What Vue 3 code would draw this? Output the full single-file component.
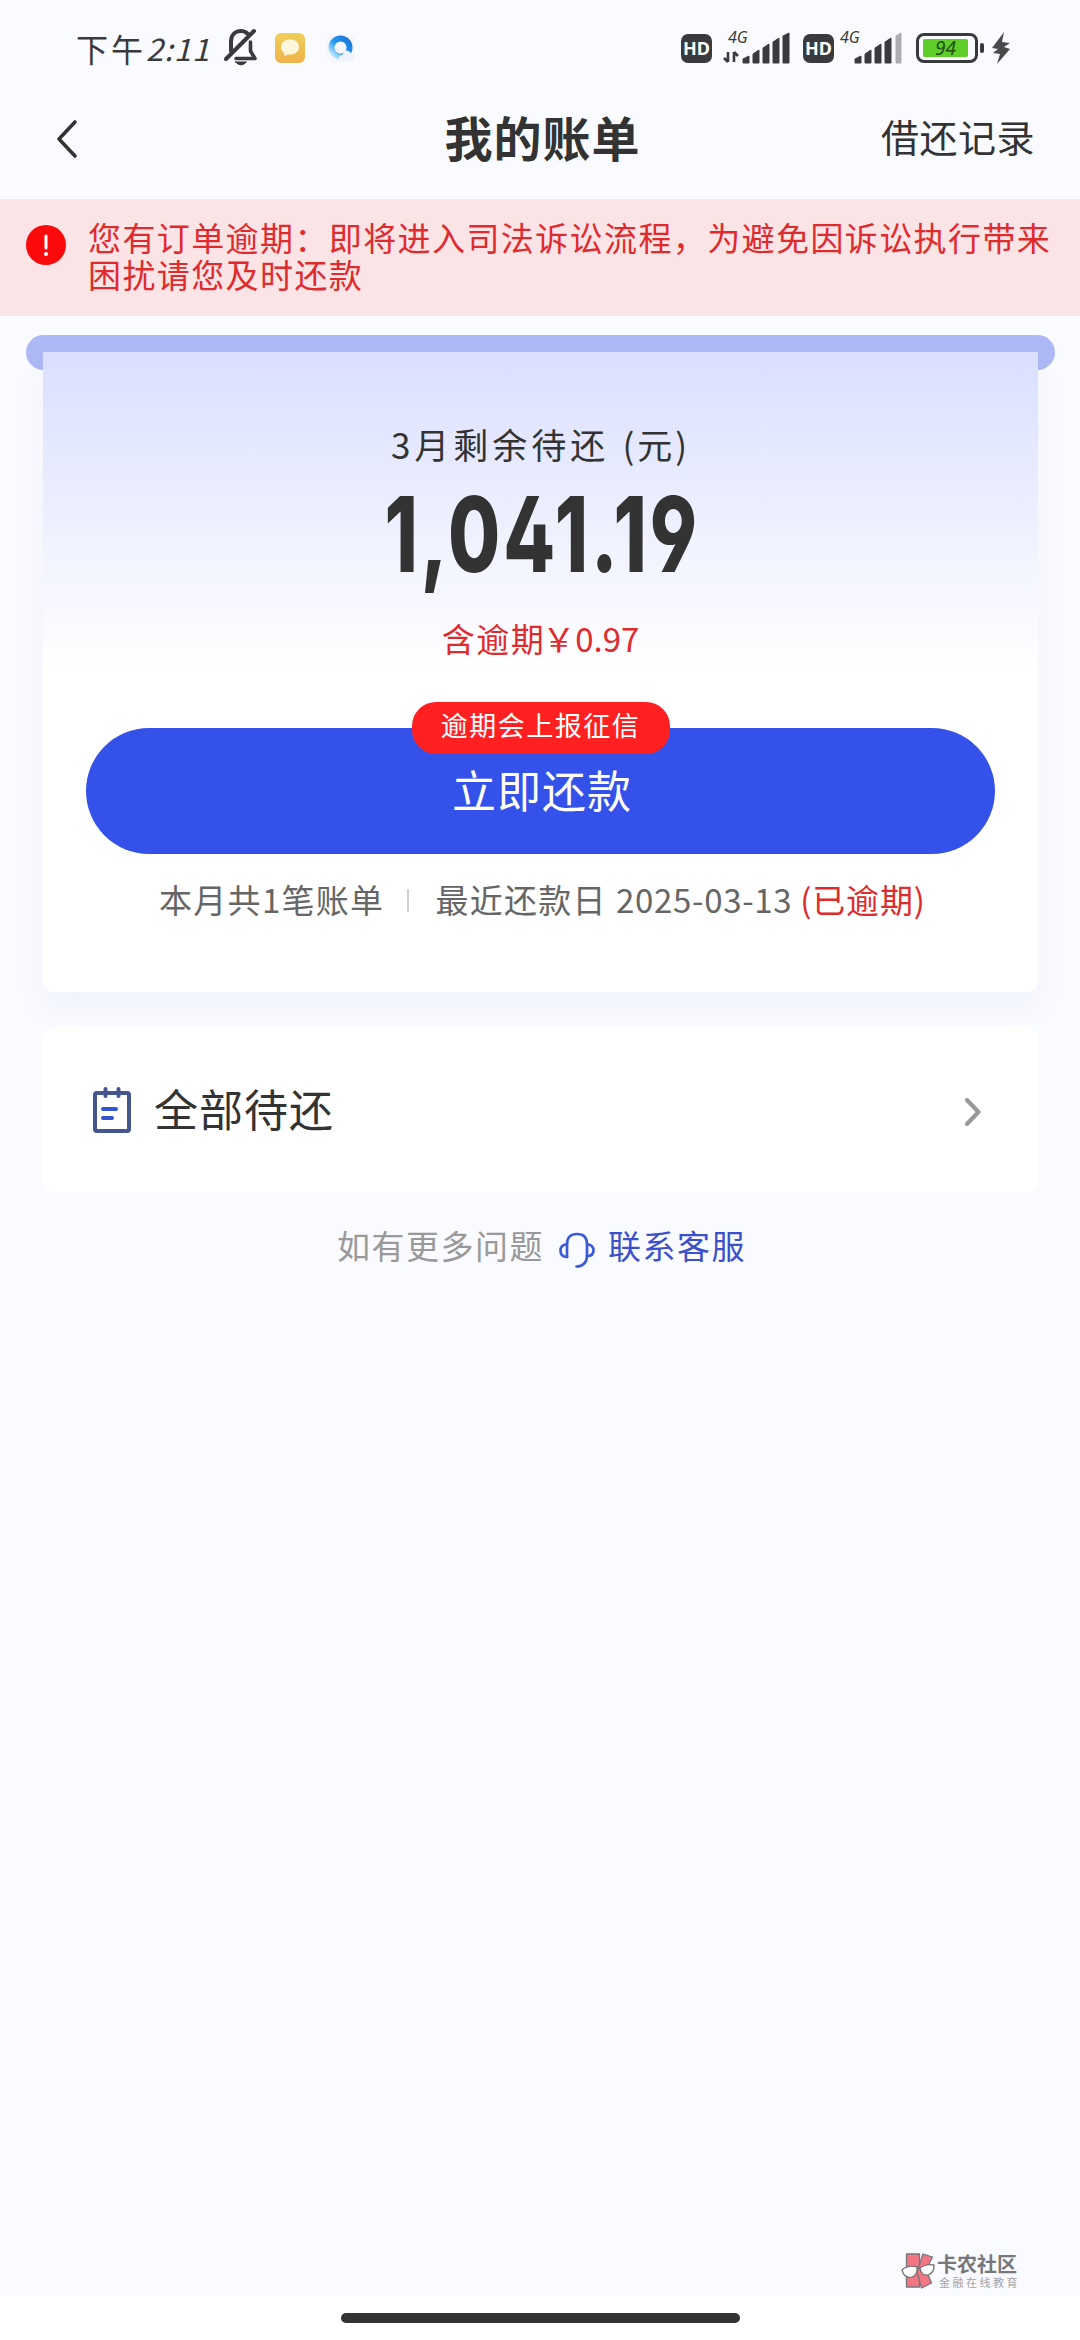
<script setup>
const notice = '您有订单逾期：即将进入司法诉讼流程，为避免因诉讼执行带来困扰请您及时还款'
</script>

<template>
  <div class="screen">
    <header class="status">
      <div class="clock"><span class="ampm">下午</span><span class="time">2:11</span></div>
      <svg class="mute" width="36" height="40" viewBox="0 0 36 40" fill="none" stroke="#3a3a3c" stroke-width="4" stroke-linecap="round" stroke-linejoin="round">
        <path d="M8 23V14C8 7 12 3 18 3C21 3 23 4 25 6" /><path d="M27.500 14V23L32 30.500H13" stroke-width="3.600" /><path d="M3 31L31 3" />
        <path d="M12.500 34H23.500Q18 40 12.500 34Z" fill="#3a3a3c" stroke-width="1" />
      </svg>
      <svg class="msg" width="30" height="30" viewBox="0 0 30 30">
        <defs><linearGradient id="gold" x1="0" y1="0" x2="0" y2="1"><stop offset="0" stop-color="#efcf58" /><stop offset="1" stop-color="#eeb24a" /></linearGradient></defs>
        <rect width="30" height="30" rx="6" fill="url(#gold)" />
        <path d="M15 6.500C9 6.500 6 10 6 14C6 17 7.500 19 9.500 20.500L9 23L13 21.500C20 22 24 18.500 24 14C24 10 21 6.500 15 6.500Z" fill="#fff7dc" />
      </svg>
      <svg class="browser" width="30" height="30" viewBox="0 0 30 30">
        <defs><linearGradient id="sky" x1="1" y1="0" x2="0" y2="1"><stop offset="0" stop-color="#1673d8" /><stop offset=".55" stop-color="#2a9df0" /><stop offset="1" stop-color="#d5f2ff" /></linearGradient></defs>
        <rect x="1" y="1" width="28" height="28" rx="6" fill="#f5f7fb" />
        <circle cx="14.500" cy="14.500" r="9" fill="none" stroke="url(#sky)" stroke-width="6" />
        <path d="M12 28Q12 22.500 16.500 22Q18 16 22.500 18Q25 19 25 21Q29 22 28 25Q27 28 24 28Z" fill="#eef3fb" />
      </svg>
      <div class="signals">
        <span class="hd">HD</span>
        <div class="net">
          <span class="gen">4G</span>
          <svg width="68" height="36" viewBox="0 0 68 36" fill="#3a3a3c">
            <path d="M5 22V32M1 28L5 32M11 32V22M11 22L15 26" stroke="#3a3a3c" stroke-width="2.600" fill="none" />
            <path d="M20 29L26 26V33H20ZM30 24L36 20V33H30ZM40 18L46 14V33H40ZM50 12L56 8V33H50ZM60 6L66 3V33H60Z" stroke="#3a3a3c" stroke-width="1" stroke-linejoin="round" />
          </svg>
        </div>
        <span class="hd second">HD</span>
        <div class="net two">
          <span class="gen">4G</span>
          <svg width="64" height="36" viewBox="0 0 64 36" fill="#3a3a3c">
            <path d="M16 29L22 26V33H16ZM26 24L32 20V33H26ZM36 18L42 14V33H36ZM46 12L52 8V33H46Z" stroke="#3a3a3c" stroke-linejoin="round" />
            <path d="M57 6L62 3V33H57Z" fill="#aeaeb0" stroke="#aeaeb0" stroke-linejoin="round" />
          </svg>
        </div>
        <div class="battery"><span class="level">94</span></div><i class="cap"></i>
        <svg class="bolt" width="18" height="32" viewBox="0 0 18 32"><path d="M12 0L0 16L6 17L1 21L8 22L5 32L18 17L12 15L18 11L10 10Z" fill="#4a4a4c" /></svg>
      </div>
    </header>

    <nav class="title-bar">
      <svg class="back" width="24" height="40" viewBox="0 0 24 40"><path d="M20 3L4 20L20 37" fill="none" stroke="#333" stroke-width="3.600" stroke-linecap="round" stroke-linejoin="round" /></svg>
      <h1>我的账单</h1>
      <a class="history">借还记录</a>
    </nav>

    <section class="notice">
      <svg width="40" height="40" viewBox="0 0 40 40"><circle cx="20" cy="20" r="20" fill="#fb0a0c" /><path d="M20 11V23" stroke="#fff" stroke-width="3" stroke-linecap="round" /><circle cx="20" cy="29" r="2" fill="#fff" /></svg>
      <p>{{ notice }}</p>
    </section>

    <main>
      <div class="slot"></div>
      <section class="bill">
        <p class="label">3月剩余待还<span class="unit">(元)</span></p>
        <p class="amount">1,041.19</p>
        <p class="overdue">含逾期<span class="yen">￥</span><span class="fee">0.97</span></p>
        <div class="pay-wrap">
          <button class="pay">立即还款</button>
          <span class="badge">逾期会上报征信</span>
        </div>
        <p class="meta"><span class="count">本月共1笔账单</span><i class="rule"></i><span class="due">最近还款日</span><span class="date">2025-03-13</span><span class="late">(已逾期)</span></p>
      </section>

      <section class="all">
        <svg width="38" height="46" viewBox="0 0 38 46" fill="none" stroke="#45568f" stroke-width="4" stroke-linecap="round">
          <rect x="2" y="6" width="34" height="38" rx="2" /><path d="M12.500 2V9M25.500 2V9" /><path d="M10 22H23M10 31H19" stroke="#3454d1" />
        </svg>
        <span>全部待还</span>
        <svg class="go" width="18" height="30" viewBox="0 0 18 30"><path d="M3 3L14.500 15L3 27" fill="none" stroke="#999" stroke-width="4.200" stroke-linecap="round" stroke-linejoin="round" /></svg>
      </section>

      <p class="help">
        <span class="ask">如有更多问题</span>
        <svg width="36" height="36" viewBox="0 0 36 36" fill="none" stroke="#3b5bdb" stroke-width="2.700" stroke-linecap="round" stroke-linejoin="round">
          <path d="M8 25V12C8 5 12 2 18 2C24 2 28 5 28 12V24C28 30 24 34.500 17.500 34.500" /><path d="M8 12Q1.500 13 1.500 18.500Q1.500 25 8 25M28 12Q34.500 13 34.500 18.500Q34.500 24 28 24" />
        </svg>
        <a>联系客服</a>
      </p>
    </main>

    <footer class="brand">
      <svg width="34" height="36" viewBox="0 0 34 36" stroke="#77777b" stroke-width="1.300" stroke-linejoin="round">
        <path d="M5.500 1H18.500V34H5.500Z" fill="#f47683" />
        <path d="M22 1L31.500 4L25 17L30.500 30L20.500 35L16 19Z" fill="#f47683" />
        <path d="M1 17Q7 11.500 16 14Q17 22 10 24.500Q3 25 1 17ZM19 15Q25 10.500 33 12Q33.500 20 27 22Q20 23 19 15Z" fill="#fff" /><path d="M16 15.500L19.500 15" />
      </svg>
      <div><strong>卡农社区</strong><small>金融在线教育</small></div>
    </footer>
    <div class="gesture"><i></i></div>
  </div>
</template>

<style>
html, body { margin: 0; background: #fafbff; }
</style>

<style scoped>
.screen { width: 1080px; height: 2340px; display: flex; flex-direction: column; overflow: hidden; background: #fafbff; color: #333; font-family: "Noto Sans CJK SC", sans-serif; }
p, h1 { margin: 0; }
i { font-style: normal; }
svg { flex: none; display: block; }
.status { height: 98px; display: flex; align-items: center; padding: 0 0 2px 76px; box-sizing: border-box; color: #3a3a3c; }
.clock { width: 147px; display: flex; align-items: center; font-size: 32px; line-height: 40px; white-space: nowrap; }
.ampm { letter-spacing: 3px; }
.time { font-style: italic; font-size: 31px; letter-spacing: 1px; }
.msg { margin-left: 16px; }
.browser { margin-left: 21px; }
.signals { display: flex; align-items: center; margin-left: 325px; }
.hd { width: 31px; height: 29px; border-radius: 7px; background: #3a3a3c; color: #fff; font: bold 18px/29px "Noto Sans", sans-serif; text-align: center; }
.net { position: relative; margin-left: 11px; }
/* network generation label sits over the signal bars */
.gen { position: absolute; left: 5px; top: -4px; font: italic 16px/22px "Noto Sans", sans-serif; }
.second { margin-left: 12px; }
.two { margin-left: 5px; }
.two .gen { left: 1px; }
.battery { box-sizing: border-box; width: 62px; height: 30px; margin-left: 13px; border: 3px solid #3a3a3c; border-radius: 8px; padding: 3px 7px 3px 4px; }
.level { display: block; height: 18px; border-radius: 2px; background: #5fce29; color: #204d12; font: italic 19px/18px "Noto Sans", sans-serif; text-align: center; }
.cap { width: 4px; height: 10px; border-radius: 2px; margin-left: 2px; background: #3a3a3c; }
.bolt { margin-left: 8px; }

.title-bar { height: 101px; display: grid; grid-template-columns: 300px 1fr 300px; align-items: center; padding-bottom: 20px; box-sizing: border-box; }
.back { margin-left: 55px; }
h1 { font-size: 48px; line-height: 60px; font-weight: 700; text-align: center; letter-spacing: 1px; margin: -6px 0 0 5px; }
.history { justify-self: end; margin: -5px 45px 0 0; font-size: 38px; line-height: 60px; letter-spacing: .5px; }

.notice { height: 117px; box-sizing: border-box; display: flex; background: #fbe4e6; padding: 20px 0 0 26px; }
.notice svg { margin-top: 6px; }
.notice p { width: 972px; margin-left: 22px; font-size: 33px; line-height: 37px; letter-spacing: 1.400px; color: #e02b2e; }

main { flex: 1; padding: 19px 25px 0 26px; }
.slot { height: 35px; border-radius: 18px; background: #adb8f5; }
.bill { height: 640px; margin: -18px 17px 35px; box-sizing: border-box; padding-top: 69px; border-radius: 0 0 10px 10px; background: linear-gradient(#dadfff, #fff 315px); box-shadow: 0 16px 30px rgba(75, 95, 200, .05); text-align: center; }
.label { font-size: 35px; line-height: 46px; letter-spacing: 4px; }
.unit { margin-left: 13px; letter-spacing: 3px; }
.amount { height: 124px; padding: 5px 0 0 5px; font: 800 105px/124px Inter, sans-serif; font-feature-settings: "ss01" 1; letter-spacing: 4px; transform: scaleX(.72); }
.overdue { margin-top: 18px; font-size: 33px; line-height: 48px; color: #e02b2e; letter-spacing: 1.500px; }
.yen { margin-left: -3px; letter-spacing: 0; }
.fee { letter-spacing: 0; }
.pay-wrap { position: relative; margin: 66px 43px 0; height: 126px; }
.pay { width: 100%; height: 126px; border: 0; border-radius: 63px; background: #3452e9; color: #fff; font: 44px/122px "Noto Sans CJK SC", sans-serif; padding: 0 0 4px 3px; box-sizing: border-box; letter-spacing: 1px; display: block; }
.badge { position: absolute; left: 50%; top: -26px; width: 258px; height: 52px; transform: translateX(-50%); border-radius: 24px; background: #ff2122; color: #fff; font-size: 27px; line-height: 46px; letter-spacing: 1.500px; white-space: nowrap; }
.meta { display: flex; align-items: center; height: 48px; margin: 21px 0 0 116px; font-size: 33px; line-height: 48px; letter-spacing: 1.300px; color: #666; white-space: nowrap; }
.rule { width: 2px; height: 23px; margin: 2px 26px 0 23px; background: #d0d0d0; }
.date { margin-left: 9px; letter-spacing: .7px; }
.late { margin-left: 8px; color: #e02b2e; letter-spacing: .8px; }
.all { height: 166px; margin: 0 17px; padding: 0 56px 0 50px; display: flex; align-items: center; box-sizing: border-box; border-radius: 12px; background: #fff; }
.all span { margin: -4px 0 0 23px; font-size: 44px; letter-spacing: 1px; line-height: 60px; }
.go { margin: 3px 0 0 auto; }
.help { display: flex; align-items: center; justify-content: center; height: 48px; margin-top: 28px; font-size: 33px; line-height: 48px; letter-spacing: 1.500px; color: #999; padding-left: 2px; }
.help svg { margin: 10px 13px 0 15px; }
.help a { color: #3b50cc; }

.brand { display: flex; align-items: center; margin: 0 0 7px 901px; height: 36px; gap: 2px; }
.brand div { display: flex; flex-direction: column; }
.brand strong { font-size: 20px; line-height: 20px; color: #77777b; white-space: nowrap; }
.brand small { font-size: 11px; line-height: 14px; margin: 1px 0 0 2px; letter-spacing: 2.500px; color: #a2a2a6; white-space: nowrap; }
.gesture { height: 44px; background: #fff; padding-top: 17px; box-sizing: border-box; }
.gesture i { display: block; width: 399px; height: 10px; margin: 0 auto; border-radius: 5px; background: #333; }
</style>
